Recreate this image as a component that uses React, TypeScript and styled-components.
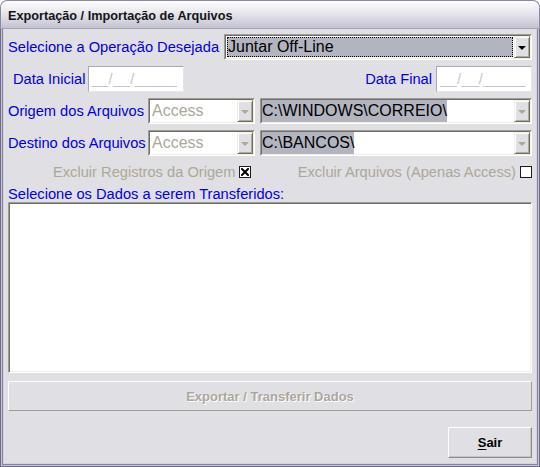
import React from "react";
import styled, { createGlobalStyle } from "styled-components";

const GlobalStyle = createGlobalStyle`
  html, body { margin: 0; padding: 0; background: #ffffff; }
  body { width: 540px; height: 467px; overflow: hidden; }
  *, *::before, *::after { box-sizing: border-box; }
`;

const Window = styled.div`
  width: 540px;
  height: 467px;
  display: flex;
  flex-direction: column;
  font-family: "Liberation Sans", Arial, sans-serif;
`;

const TitleBar = styled.div`
  height: 29px;
  flex-shrink: 0;
  display: flex;
  align-items: center;
  padding: 2px 0 0 7px;
  border-radius: 7px 7px 0 0;
  border: 1px solid #8b89a3;
  border-bottom: 1px solid #a6a5b8;
  background: linear-gradient(#fdfdfe 0%, #f1f1f5 25%, #dedde6 60%, #c3c2d1 100%);
`;

const Title = styled.span`
  font-weight: bold;
  font-size: 12.7px;
  color: #141414;
  white-space: nowrap;
`;

const Frame = styled.div`
  flex: 1;
  display: flex;
  flex-direction: column;
  background: #e0dfe3;
  padding: 5px 8px 9px 8px;
  box-shadow:
    inset 1px 0 #6c6a88, inset -1px 0 #6c6a88, inset 0 -1px #6c6a88,
    inset 2px 0 #c6c5d4, inset -2px 0 #c6c5d4, inset 0 -2px #c6c5d4,
    inset 3px 0 #8583a0, inset -3px 0 #8583a0, inset 0 -3px #8583a0,
    inset 4px 0 #d4d3dd, inset -4px 0 #d4d3dd, inset 0 -4px #d4d3dd;
`;

const Row = styled.div<{ $mt?: number; $spread?: boolean }>`
  display: flex;
  align-items: center;
  height: 26px;
  flex-shrink: 0;
  margin-top: ${(p) => p.$mt ?? 0}px;
  justify-content: ${(p) => (p.$spread ? "space-between" : "flex-start")};
`;

const Label = styled.span<{ $width?: number; $indent?: number; $disabled?: boolean }>`
  font-size: 14.67px;
  color: ${(p) => (p.$disabled ? "#aca899" : "#0000e8")};
  white-space: nowrap;
  flex-shrink: 0;
  ${(p) => (p.$width ? `width: ${p.$width}px;` : "")}
  padding-left: ${(p) => p.$indent ?? 0}px;
`;

const Group = styled.div`
  display: flex;
  align-items: center;
  height: 100%;
`;

const ComboBox = styled.div<{ $width?: number; $ml?: number }>`
  height: 26px;
  display: flex;
  ${(p) => (p.$width ? `width: ${p.$width}px; flex-shrink: 0;` : "flex: 1;")}
  margin-left: ${(p) => p.$ml ?? 0}px;
  border: 1px solid;
  border-color: #9d9c99 #ffffff #ffffff #9d9c99;
`;

const ComboInner = styled.div`
  flex: 1;
  display: flex;
  min-width: 0;
  border: 1px solid;
  border-color: #716f64 #f1efe2 #f1efe2 #716f64;
  background: #ffffff;
`;

const ComboField = styled.div<{ $focused?: boolean; $disabled?: boolean }>`
  flex: 1;
  min-width: 0;
  display: flex;
  align-items: center;
  font-size: 16px;
  white-space: nowrap;
  overflow: hidden;
  color: ${(p) => (p.$disabled ? "#aca899" : "#000000")};
  ${(p) =>
    p.$focused
      ? `margin: 1px; background: #b2b4bf; outline: 1px dotted #000; outline-offset: -1px; padding-left: 1px;`
      : p.$disabled
      ? `padding-left: 2px;`
      : `padding-left: 0;`}
`;

const Selected = styled.span`
  display: inline-flex;
  align-items: center;
  height: 100%;
  background: #b2b4bf;
`;

const DropButton = styled.div<{ $disabled?: boolean }>`
  width: 16px;
  flex-shrink: 0;
  display: flex;
  align-items: center;
  justify-content: center;
  background: #e0dfe3;
  border: 1px solid;
  border-color: #f1efe2 #716f64 #716f64 #f1efe2;
  box-shadow: inset 1px 1px #ffffff, inset -1px -1px #aca899;
  &::after {
    content: "";
    width: 0;
    height: 0;
    border-left: 4px solid transparent;
    border-right: 4px solid transparent;
    border-top: 4px solid ${(p) => (p.$disabled ? "#aca899" : "#000000")};
    margin-top: 1px;
  }
`;

const DateBox = styled.div<{ $ml?: number }>`
  width: 96px;
  height: 26px;
  margin-left: ${(p) => p.$ml ?? 0}px;
  display: flex;
  align-items: center;
  padding-left: 3px;
  background: #ffffff;
  border: 1px solid;
  border-color: #aaa9b1 #e6e6ea #e6e6ea #aaa9b1;
  font-size: 14.67px;
  letter-spacing: 0.4px;
  color: #c4c4c8;
  white-space: nowrap;
`;

const CheckItem = styled.div<{ $indent?: number }>`
  display: flex;
  align-items: center;
  gap: 4px;
  padding-left: ${(p) => p.$indent ?? 0}px;
`;

const CheckBox = styled.span`
  width: 12px;
  height: 12px;
  display: inline-flex;
  align-items: center;
  justify-content: center;
  background: #ffffff;
  border: 1px solid #1c1c1c;
  flex-shrink: 0;
`;

const CheckRow = styled.div`
  display: flex;
  align-items: center;
  justify-content: space-between;
  height: 16px;
  margin-top: 8px;
  flex-shrink: 0;
`;

const SectionLabel = styled.div`
  height: 16px;
  margin-top: 6px;
  display: flex;
  align-items: center;
  font-size: 14.67px;
  color: #0000e8;
  white-space: nowrap;
  flex-shrink: 0;
`;

const Memo = styled.div`
  flex: 1;
  background: #ffffff;
  border: 1px solid;
  border-color: #9d9c99 #ffffff #ffffff #9d9c99;
  box-shadow: inset 1px 1px #716f64, inset -1px -1px #f1efe2;
`;

const WideButton = styled.div`
  height: 30px;
  margin-top: 8px;
  flex-shrink: 0;
  display: flex;
  align-items: center;
  justify-content: center;
  border: 1px solid;
  border-color: #ffffff #9d9c99 #9d9c99 #ffffff;
  font-size: 13px;
  font-weight: bold;
  color: #aca899;
  text-shadow: 1px 1px #ffffff;
`;

const Footer = styled.div`
  margin-top: 16px;
  display: flex;
  justify-content: flex-end;
  flex-shrink: 0;
`;

const Button = styled.div`
  width: 84px;
  height: 31px;
  display: flex;
  align-items: center;
  justify-content: center;
  border: 1px solid;
  border-color: #ffffff #8c8b88 #8c8b88 #ffffff;
  box-shadow: inset -1px -1px #c4c3c8;
  font-size: 13px;
  font-weight: bold;
  color: #000000;
  u { text-decoration: underline; text-underline-offset: 2px; }
`;

const CrossMark = () => (
  <svg width="8" height="8" viewBox="0 0 8 8">
    <path d="M1 1 L7 7 M7 1 L1 7" stroke="#000" strokeWidth="2" strokeLinecap="square" />
  </svg>
);

export default function App() {
  return (
    <>
      <GlobalStyle />
      <Window>
        <TitleBar>
          <Title>Exportação / Importação de Arquivos</Title>
        </TitleBar>
        <Frame>
          <Row>
            <Label $width={216}>Selecione a Operação Desejada</Label>
            <ComboBox>
              <ComboInner>
                <ComboField $focused>Juntar Off-Line</ComboField>
                <DropButton />
              </ComboInner>
            </ComboBox>
          </Row>

          <Row $mt={6} $spread>
            <Group>
              <Label $indent={5}>Data Inicial</Label>
              <DateBox $ml={2}>__/__/_____</DateBox>
            </Group>
            <Group>
              <Label>Data Final</Label>
              <DateBox $ml={4}>__/__/_____</DateBox>
            </Group>
          </Row>

          <Row $mt={6}>
            <Label $width={140}>Origem dos Arquivos</Label>
            <ComboBox $width={107}>
              <ComboInner>
                <ComboField $disabled>Access</ComboField>
                <DropButton $disabled />
              </ComboInner>
            </ComboBox>
            <ComboBox $ml={5}>
              <ComboInner>
                <ComboField>
                  <Selected>C:\WINDOWS\CORREIO\</Selected>
                </ComboField>
                <DropButton $disabled />
              </ComboInner>
            </ComboBox>
          </Row>

          <Row $mt={6}>
            <Label $width={140}>Destino dos Arquivos</Label>
            <ComboBox $width={107}>
              <ComboInner>
                <ComboField $disabled>Access</ComboField>
                <DropButton $disabled />
              </ComboInner>
            </ComboBox>
            <ComboBox $ml={5}>
              <ComboInner>
                <ComboField>
                  <Selected>C:\BANCOS\</Selected>
                </ComboField>
                <DropButton $disabled />
              </ComboInner>
            </ComboBox>
          </Row>

          <CheckRow>
            <CheckItem $indent={45}>
              <Label $disabled>Excluir Registros da Origem</Label>
              <CheckBox>
                <CrossMark />
              </CheckBox>
            </CheckItem>
            <CheckItem>
              <Label $disabled>Excluir Arquivos (Apenas Access)</Label>
              <CheckBox />
            </CheckItem>
          </CheckRow>

          <SectionLabel>Selecione os Dados a serem Transferidos:</SectionLabel>
          <Memo />

          <WideButton>Exportar / Transferir Dados</WideButton>

          <Footer>
            <Button>
              <u>S</u>air
            </Button>
          </Footer>
        </Frame>
      </Window>
    </>
  );
}
